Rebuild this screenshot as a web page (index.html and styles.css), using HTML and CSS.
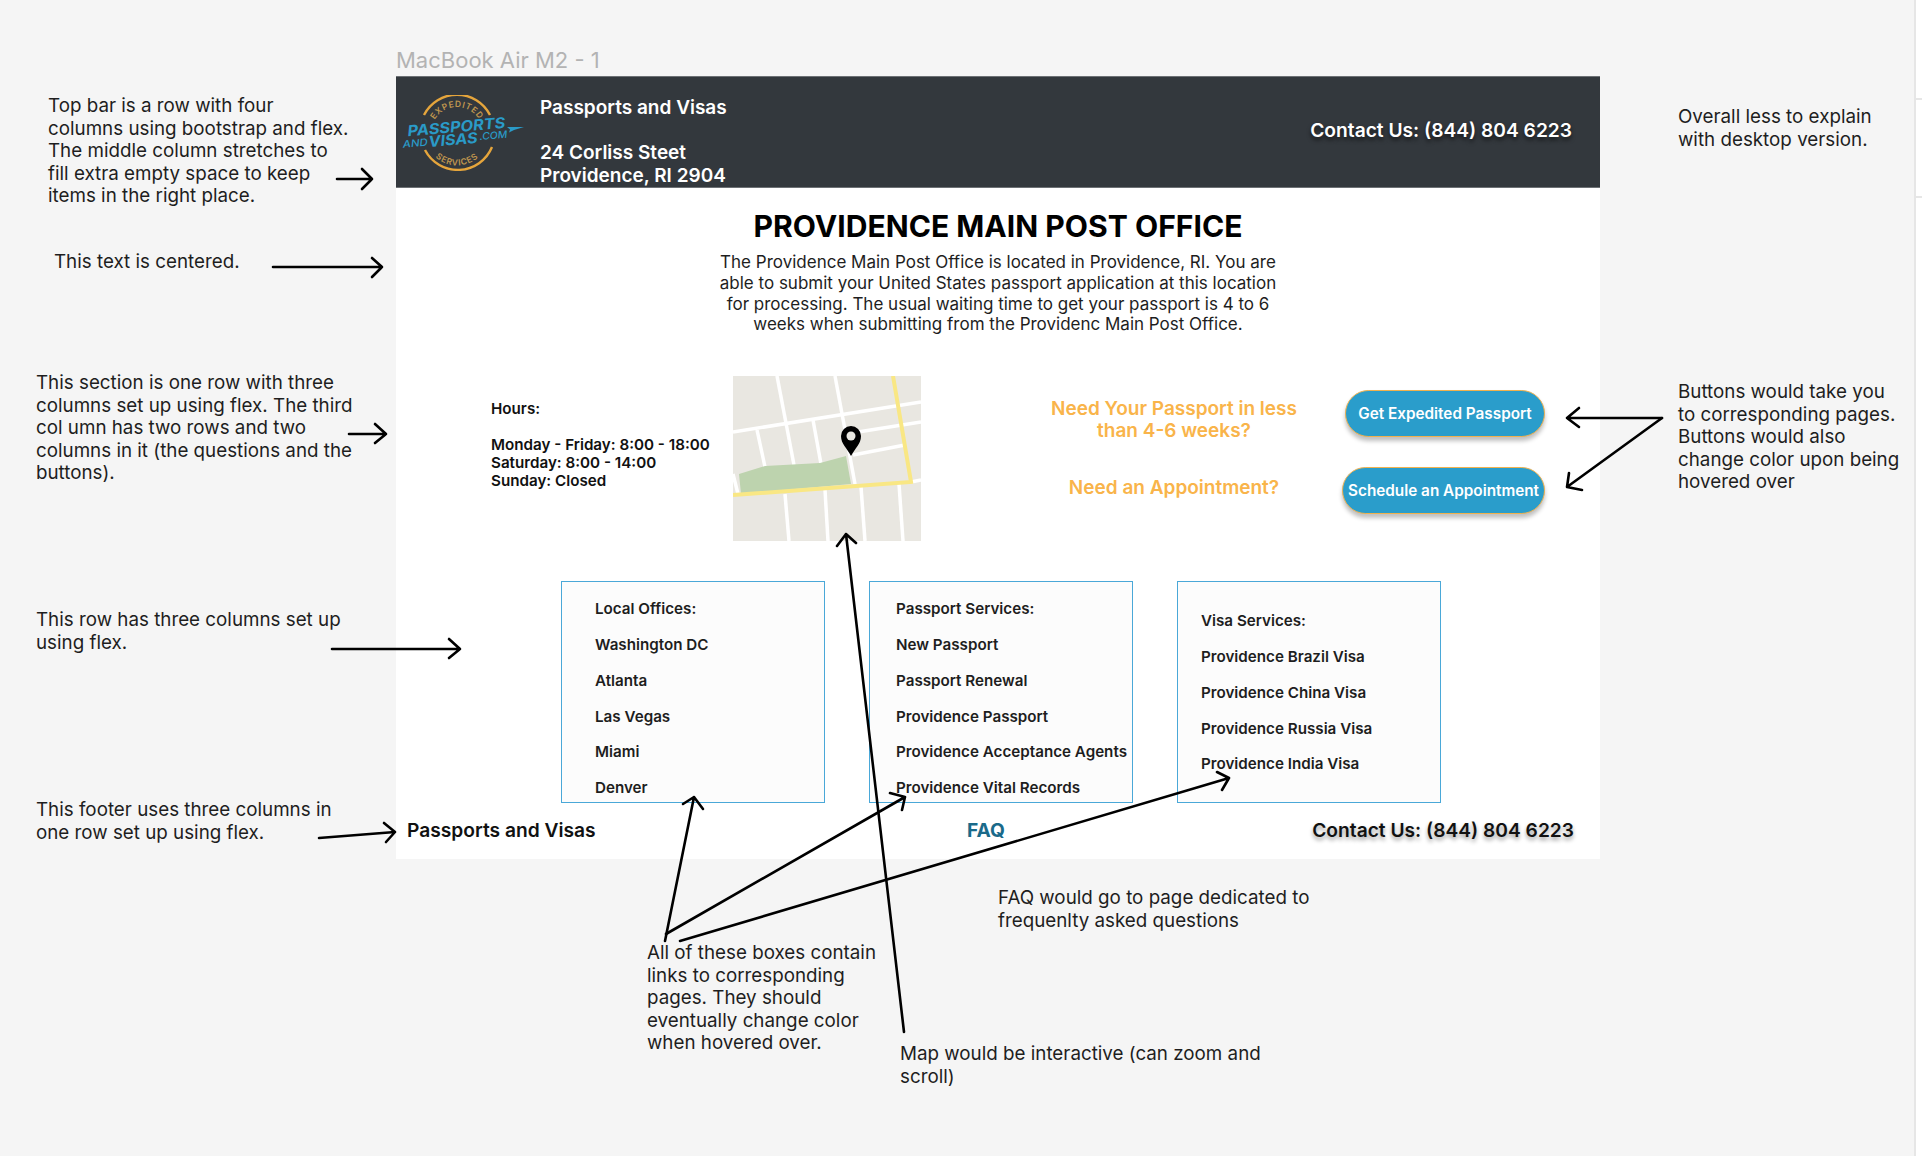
FILE: index.html
```html
<!DOCTYPE html>
<html lang="en">
<head>
<meta charset="utf-8">
<title>MacBook Air M2 - 1</title>
<link rel="stylesheet" href="styles.css">
</head>
<body>
<div class="canvas">
  <div class="edge"></div>
  <div class="tick tick-a"></div>
  <div class="tick tick-b"></div>

  <div class="frame-label">MacBook Air M2 - 1</div>

  <main class="frame">
    <header class="topbar">
      <svg class="logo" viewBox="0 0 122 76" aria-label="Passports and Visas logo">
        <defs>
          <path id="arc-top" d="M31 28 A26 26 0 0 1 79 28"/>
          <path id="arc-bottom" d="M27 54 A32 32 0 0 0 83 54"/>
        </defs>
        <path class="ring" d="M22 20 A37 37 0 0 1 88 20"/>
        <path class="ring" d="M23 55 A37 37 0 0 0 90 52"/>
        <text class="logo-arc"><textPath href="#arc-top" startOffset="50%" text-anchor="middle">EXPEDITED</textPath></text>
        <text class="logo-arc"><textPath href="#arc-bottom" startOffset="50%" text-anchor="middle">SERVICES</textPath></text>
        <g transform="rotate(-5 55 38)">
          <text class="logo-big" x="6" y="37" textLength="98" lengthAdjust="spacingAndGlyphs">PASSPORTS</text>
          <text class="logo-small" x="0" y="48" textLength="25" lengthAdjust="spacingAndGlyphs">AND</text>
          <text class="logo-big" x="26" y="49.5" textLength="49" lengthAdjust="spacingAndGlyphs">VISAS</text>
          <text class="logo-small" x="77" y="47" textLength="28" lengthAdjust="spacingAndGlyphs">.COM</text>
        </g>
        <path class="plane" d="M105 32 L122 32 L112 35 L107 37.5 L108 34.5 Z"/>
      </svg>
      <div class="top-address">
        <div>Passports and Visas</div>
        <div class="spacer-line"></div>
        <div>24 Corliss Steet</div>
        <div>Providence, RI 2904</div>
      </div>
      <div class="top-fill"></div>
      <div class="top-contact">Contact Us: (844) 804 6223</div>
    </header>

    <section class="intro">
      <h1>PROVIDENCE MAIN POST OFFICE</h1>
      <p>The Providence Main Post Office is located in Providence, RI. You are<br>able to submit your United States passport application at this location<br>for processing. The usual waiting time to get your passport is 4 to 6<br>weeks when submitting from the Providenc Main Post Office.</p>
    </section>

    <section class="info">
      <div class="hours">
        <div>Hours:</div>
        <div class="spacer-line"></div>
        <div>Monday - Friday: 8:00 - 18:00</div>
        <div>Saturday: 8:00 - 14:00</div>
        <div>Sunday: Closed</div>
      </div>
      <svg class="map" viewBox="0 0 188 165" aria-label="Map">
        <rect width="188" height="165" fill="#e9e7e1"/>
        <g class="roads">
          <path d="M0 56 L188 26"/>
          <path d="M44 0 L61 89"/>
          <path d="M52 118 L56 165"/>
          <path d="M102 0 L122 108"/>
          <path d="M24 54 L32 91"/>
          <path d="M80 44 L88 88"/>
          <path d="M0 98 L5 118"/>
          <path d="M125 56 L188 46"/>
          <path d="M120 79 L172 69"/>
          <path d="M178 106 L188 104"/>
          <path d="M92 114 L95 165"/>
          <path d="M128 111 L132 165"/>
          <path d="M166 108 L170 165"/>
        </g>
        <polygon points="6,98 32,90 87,87 113,80 118,108 8,118" fill="#bdd3ae"/>
        <path class="highway" d="M160 0 L178 106 L0 119"/>
        <path d="M118 80 C114 72 108 68 108 60 A10 10 0 0 1 128 60 C128 68 122 72 118 80 Z" fill="#000"/>
        <circle cx="118" cy="60" r="4.5" fill="#e9e7e1"/>
      </svg>
      <div class="cta">
        <div class="cta-row">
          <div class="cta-q cta-q-one">Need Your Passport in less<br>than 4-6 weeks?</div>
          <a class="btn btn-one" href="#">Get Expedited Passport</a>
        </div>
        <div class="cta-row">
          <div class="cta-q cta-q-two">Need an Appointment?</div>
          <a class="btn btn-two" href="#">Schedule an Appointment</a>
        </div>
      </div>
    </section>

    <section class="boxes">
      <ul class="box box-one">
        <li>Local Offices:</li><li>Washington DC</li><li>Atlanta</li><li>Las Vegas</li><li>Miami</li><li>Denver</li>
      </ul>
      <ul class="box box-two">
        <li>Passport Services:</li><li>New Passport</li><li>Passport Renewal</li><li>Providence Passport</li><li>Providence Acceptance Agents</li><li>Providence Vital Records</li>
      </ul>
      <ul class="box box-three">
        <li>Visa Services:</li><li>Providence Brazil Visa</li><li>Providence China Visa</li><li>Providence Russia Visa</li><li>Providence India Visa</li>
      </ul>
    </section>

    <footer class="foot">
      <div class="foot-name">Passports and Visas</div>
      <a class="foot-faq" href="#">FAQ</a>
      <div class="foot-contact">Contact Us: (844) 804 6223</div>
    </footer>
  </main>

  <p class="note n1">Top bar is a row with four<br>columns using bootstrap and flex.<br>The middle column stretches to<br>fill extra empty space to keep<br>items in the right place.</p>
  <p class="note n2">This text is centered.</p>
  <p class="note n3">This section is one row with three<br>columns set up using flex. The third<br>col umn has two rows and two<br>columns in it (the questions and the<br>buttons).</p>
  <p class="note n4">This row has three columns set up<br>using flex.</p>
  <p class="note n5">This footer uses three columns in<br>one row set up using flex.</p>
  <p class="note n6">All of these boxes contain<br>links to corresponding<br>pages. They should<br>eventually change color<br>when hovered over.</p>
  <p class="note n7">Map would be interactive (can zoom and<br>scroll)</p>
  <p class="note n8">FAQ would go to page dedicated to<br>frequenlty asked questions</p>
  <p class="note n9">Overall less to explain<br>with desktop version.</p>
  <p class="note n10">Buttons would take you<br>to corresponding pages.<br>Buttons would also<br>change color upon being<br>hovered over</p>

  <svg class="arrows" viewBox="0 0 1922 1156">
    <path d="M337 179 H372 M362 169 L372 179 L362 189"/>
    <path d="M273 267 H382 M372 258 L382 267 L372 277"/>
    <path d="M349 434 H386 M375 424 L386 434 L375 443"/>
    <path d="M332 649 H460 M449 639 L460 649 L449 658"/>
    <path d="M319 838 L395 832 M384 823 L395 832 L386 842"/>
    <path d="M665 941 L694 797 M683 804 L694 797 L703 809"/>
    <path d="M666 934 L905 797 M890 793 L905 797 L902 810"/>
    <path d="M680 941 L1229 778 M1217 772 L1229 778 L1222 790"/>
    <path d="M904 1032 L846 534 M837 546 L846 534 L856 543"/>
    <path d="M1662 418 H1567 M1579 408 L1567 418 L1579 427"/>
    <path d="M1662 418 L1567 487 M1569 473 L1567 487 L1582 490"/>
  </svg>
</div>
</body>
</html>
```
FILE: styles.css
```css
* { box-sizing: border-box; }
html, body { margin: 0; padding: 0; }
body {
  width: 1922px;
  height: 1156px;
  overflow: hidden;
  background: #f5f5f5;
  font-family: Inter, "Liberation Sans", sans-serif;
  color: #1e1e1e;
}
.canvas { position: relative; width: 1922px; height: 1156px; overflow: hidden; }
.edge { position: absolute; left: 1914px; top: 0; bottom: 0; width: 8px; background: #fff; border-left: 2px solid #e6e6e6; }
.tick { position: absolute; left: 1916px; width: 6px; height: 2px; background: #e6e6e6; }
.tick-a { top: 98px; }
.tick-b { top: 196px; }

.frame-label { position: absolute; left: 396px; top: 47px; font-size: 22px; line-height: 26px; color: #b3b3b3; }
.frame {
  position: absolute; left: 396px; top: 76px;
  width: 1204px; height: 783px;
  background: #fff;
  display: flex; flex-direction: column;
}

.topbar {
  height: 112px; flex: none;
  background: #33383d;
  border-top: 1px solid #6d7175;
  border-bottom: 1px solid #6d7175;
  display: flex; align-items: center;
  color: #fff;
  font-weight: 600; font-size: 19px; line-height: 22.5px;
}
.logo { width: 122px; height: 76px; flex: none; margin: 0 0 -2px 6px; }
.ring { fill: none; stroke: #e5a53c; stroke-width: 2.4; }
.logo-arc { font: 600 8.5px Inter, sans-serif; fill: #c0974f; letter-spacing: .7px; }
.logo-big { font: italic 700 15px Inter, sans-serif; fill: #2a9bc8; }
.logo-small { font: italic 500 10px Inter, sans-serif; fill: #2a9bc8; }
.plane { fill: #2a9bc8; }
.top-address { margin-left: 16px; padding-top: 20px; }
.spacer-line { height: 1lh; }
.top-fill { flex: 1; }
.top-contact { margin: 0 28px 4px 0; text-shadow: 0 3px 4px rgba(0,0,0,.6); font-size: 19.2px; }

.intro { flex: none; text-align: center; padding-top: 19px; }
.intro h1 { margin: 0; font-size: 30.1px; line-height: 38px; font-weight: 700; color: #000; }
.intro p { margin: 7px 0 0; font-size: 17px; line-height: 20.8px; color: #1e1e1e; }

.info { flex: none; display: flex; align-items: flex-start; margin-top: 41px; height: 165px; }
.hours { margin-left: 95px; width: 242px; margin-top: 24px; font-size: 15.2px; line-height: 18px; font-weight: 600; color: #111; }
.map { width: 188px; height: 165px; flex: none; display: block; }
.roads path { fill: none; stroke: #fff; stroke-width: 3.5; }
.highway { fill: none; stroke: #f9e784; stroke-width: 4; }
.cta { flex: 1; display: flex; flex-direction: column; padding: 14px 55px 0 0; gap: 30px; }
.cta-row { display: flex; align-items: center; justify-content: flex-end; height: 47px; }
.cta-q { width: 300px; text-align: center; color: #f9b44a; font-weight: 600; font-size: 19px; line-height: 22px; }
.cta-q-one { margin: 12px 21px 0 0; }
.cta-q-two { margin: 0 18px 5px 0; }
.btn {
  display: flex; align-items: center; justify-content: center;
  height: 47px; border-radius: 24px;
  background: #2a9dcb; border: 1.5px solid #f0b14e;
  box-shadow: 0 4px 4px rgba(0,0,0,.25);
  color: #fff; font-size: 15.3px; font-weight: 600; text-decoration: none; white-space: nowrap;
}
.btn-one { width: 200px; }
.btn-two { width: 203px; }

.boxes { flex: none; display: flex; gap: 44px; margin: 40px 0 0 165px; }
.box {
  list-style: none; margin: 0; width: 264px; height: 222px;
  background: #fcfcfc; border: 1.5px solid #4aa8d8;
  font-size: 15.2px; font-weight: 600; color: #1e1e1e;
  line-height: 18px; display: flex; flex-direction: column; gap: 17.8px;
}
.box-one { padding: 18px 0 0 33px; }
.box-two { padding: 18px 0 0 26px; }
.box-three { padding: 30px 0 0 23px; }

.foot { flex: none; display: flex; align-items: center; justify-content: space-between; height: 54px; padding: 0 26px 0 11px; font-size: 19.2px; font-weight: 600; color: #111; position: relative; }
.foot-faq { position: absolute; left: 571px; color: #1a6a8a; text-decoration: none; font-weight: 700; }
.foot-contact { text-shadow: 0 3px 4px rgba(0,0,0,.4); }

.note { position: absolute; margin: 0; font-size: 18.8px; line-height: 22.5px; color: #1e1e1e; white-space: nowrap; }
.n1 { left: 48px; top: 95px; }
.n2 { left: 54px; top: 251px; }
.n3 { left: 36px; top: 372px; }
.n4 { left: 36px; top: 609px; }
.n5 { left: 36px; top: 799px; }
.n6 { left: 647px; top: 942px; }
.n7 { left: 900px; top: 1043px; }
.n8 { left: 998px; top: 887px; }
.n9 { left: 1678px; top: 106px; }
.n10 { left: 1678px; top: 381px; }

.arrows { position: absolute; left: 0; top: 0; width: 1922px; height: 1156px; pointer-events: none; }
.arrows path { fill: none; stroke: #000; stroke-width: 2.6; stroke-linecap: round; stroke-linejoin: round; }
```
